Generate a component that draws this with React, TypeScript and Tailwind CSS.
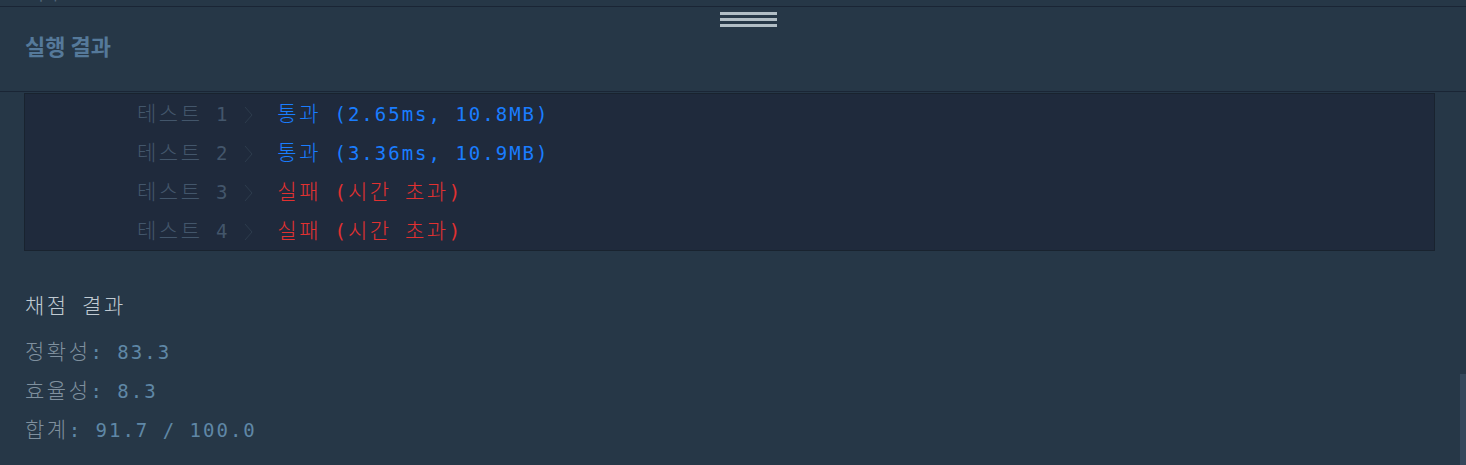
import React from 'react'

const mono = 'font-["DejaVu_Sans_Mono","Noto_Sans_CJK_KR",monospace]'

const tests = [
  { no: 1, pass: true, status: '통과', detail: '(2.65ms, 10.8MB)' },
  { no: 2, pass: true, status: '통과', detail: '(3.36ms, 10.9MB)' },
  { no: 3, pass: false, status: '실패', detail: '(시간 초과)' },
  { no: 4, pass: false, status: '실패', detail: '(시간 초과)' },
]

const scores = [
  { label: '정확성', value: '83.3' },
  { label: '효율성', value: '8.3' },
  { label: '합계', value: '91.7 / 100.0' },
]

const Ko = ({ text }: { text: string }) => (
  <>
    {text.split(/([\uAC00-\uD7A3]+)/).map((part, i) =>
      /[\uAC00-\uD7A3]/.test(part) ? (
        <span key={i} className="text-[21px] tracking-[2.5px]">{part}</span>
      ) : (
        part
      )
    )}
  </>
)

const Chevron = () => (
  <svg className="w-[9px] h-[18px] text-[#2d3c4d] shrink-0" viewBox="0 0 9 18" fill="none" stroke="currentColor" strokeWidth="1">
    <polyline points="1,1 8,9 1,17" />
  </svg>
)

export default function App() {
  return (
    <div className="h-[465px] w-full overflow-hidden bg-[#263747] flex flex-col">
      {/* clipped row from the panel above */}
      <div className="h-[6px] overflow-hidden">
        <div className={`-mt-[15px] pl-[29px] text-[16px] leading-[20px] text-[#56687b] ${mono}`}>기록</div>
      </div>
      <div className="h-px bg-[#1a2535]" />

      {/* Header */}
      <div className="h-[84px] shrink-0">
        <div className="ml-[720px] pt-[5px] flex flex-col gap-[3px]">
          <div className="w-[57px] h-[3px] bg-[#b1bdc5]" />
          <div className="w-[57px] h-[3px] bg-[#b1bdc5]" />
          <div className="w-[57px] h-[3px] bg-[#b1bdc5]" />
        </div>
        <h2 className='mt-[4px] pl-[25px] text-[22px] leading-[28px] font-bold text-[#55799a] font-["Noto_Sans_CJK_KR",sans-serif]'>
          실행 결과
        </h2>
      </div>
      <div className="h-px bg-[#1a2535]" />

      {/* Result body */}
      <div className="flex flex-1 min-h-0">
        <div className={`flex-1 pl-[24px] pr-[25px] pt-px ${mono} text-[19px] tracking-[2px] font-light`}>
          <div className="border border-[#19232f] bg-[#1f2a3c]">
            {tests.map((t) => (
              <div key={t.no} className="h-[39px] flex items-center pt-[2px] pl-[112px] whitespace-pre">
                <span className="text-[#43566b]"><Ko text={`테스트 ${t.no}`} /></span>
                <span className="ml-[15px]"><Chevron /></span>
                <span className={`ml-[24px] ${t.pass ? 'text-[#1a7dff]' : 'text-[#e23131]'}`}>
                  <Ko text={`${t.status} ${t.detail}`} />
                </span>
              </div>
            ))}
          </div>

          <div className="mt-[35px] pl-px">
            <div className="h-[39px] flex items-center pt-[2px] text-[#c0cad2] whitespace-pre">
              <span><Ko text="채점 결과" /></span>
            </div>
            <div className="mt-[7px]">
              {scores.map((s) => (
                <div key={s.label} className="h-[39px] flex items-center pt-[2px] whitespace-pre">
                  <span className="text-[#7f909e]"><Ko text={s.label} /></span>
                  <span className="text-[#5f87a6]">: {s.value}</span>
                </div>
              ))}
            </div>
          </div>
        </div>

        {/* scrollbar */}
        <div className="w-[6px] flex flex-col justify-end">
          <div className="h-[91px] bg-[#35485c]" />
        </div>
      </div>
    </div>
  )
}
